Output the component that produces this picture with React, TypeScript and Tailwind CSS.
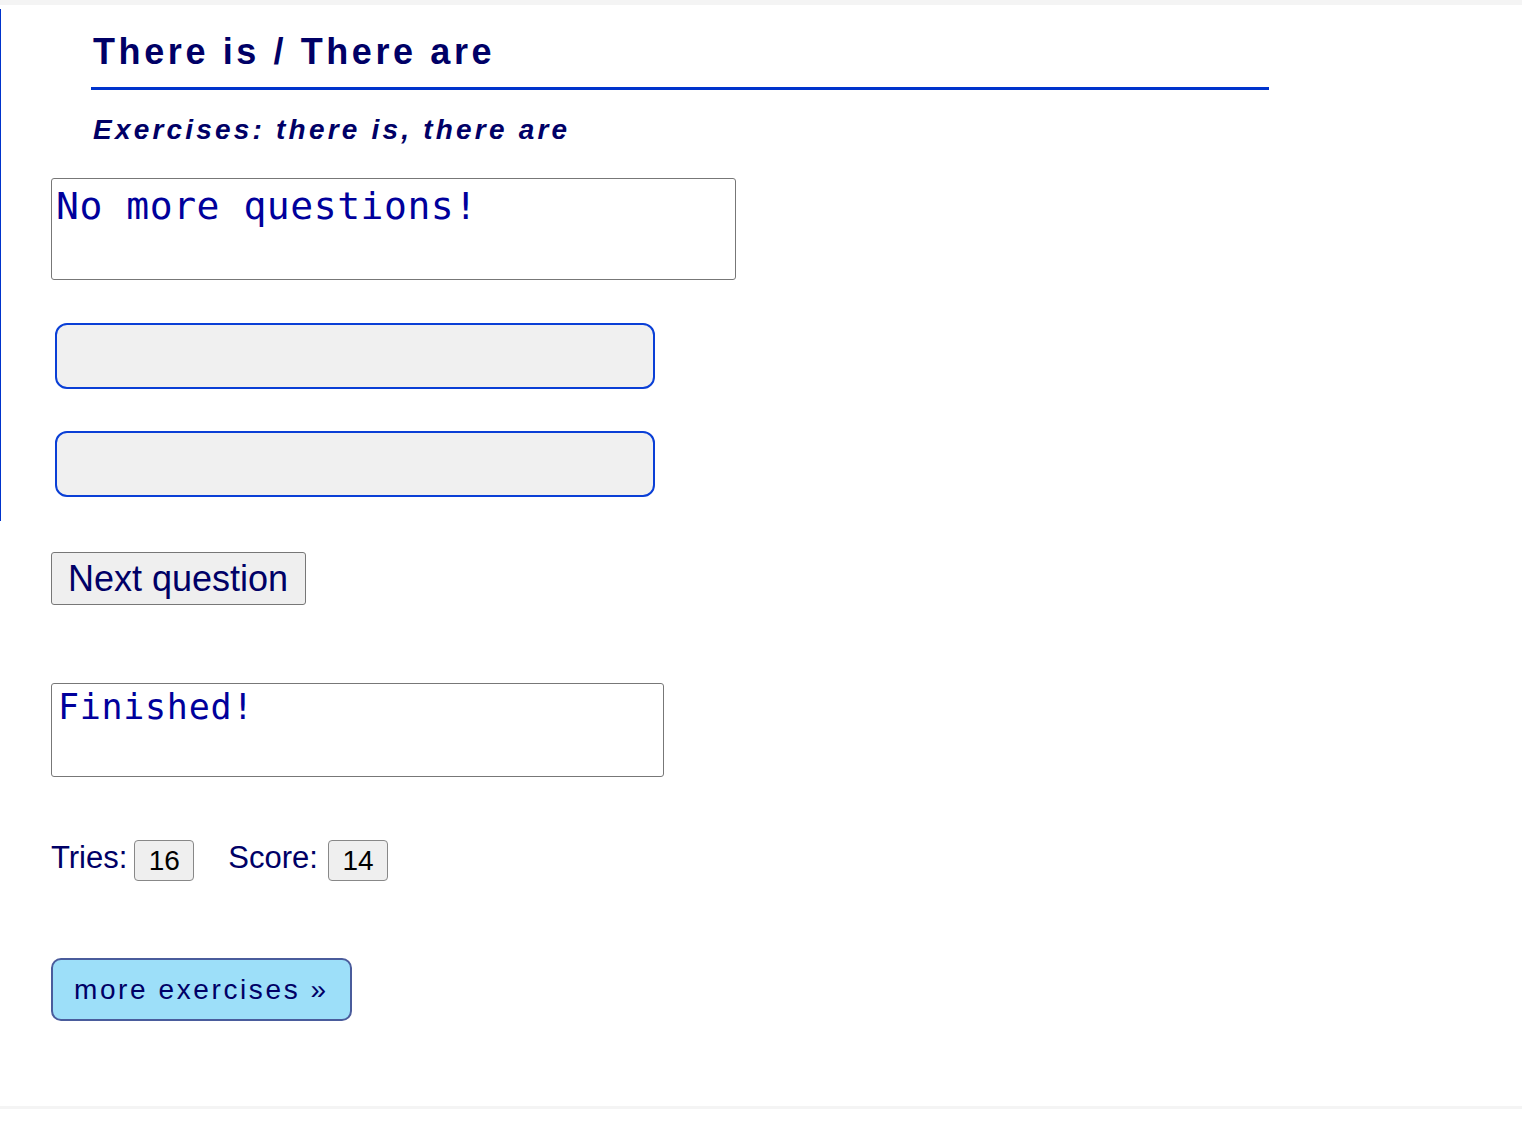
import React from "react";

const sans = "font-['Liberation_Sans',Arial,sans-serif]";
const mono = "font-['DejaVu_Sans_Mono','Liberation_Mono',monospace]";

function Counter({ label, value, gap, boxGap }: { label: string; value: number; gap: string; boxGap: string }) {
  return (
    <div className={`flex items-start ${gap}`}>
      <span className="text-[31px] leading-[36px] text-[#000066]">{label}</span>
      <div
        className={`${boxGap} flex h-[41px] w-[60px] items-center justify-center rounded-[4px] border border-[#888] bg-[#efefef] text-[28px] text-black`}
      >
        {value}
      </div>
    </div>
  );
}

export default function App() {
  return (
    <div className={`min-h-[1134px] bg-white ${sans}`}>
      <div className="h-[5px] bg-[#f4f4f4]" />

      <div className="mt-[4px] border-l border-[#0033cc] pb-[24px]">
        <div className="ml-[90px] w-[1178px] border-b-[3px] border-[#0033cc] pb-[14px] pl-[2px] pt-[22px]">
          <h1 className="text-[36px] font-bold leading-[42px] tracking-[3.6px] text-[#000066]">
            There is / There are
          </h1>
        </div>
        <h2 className="ml-[92px] mt-[24px] text-[28px] font-bold italic leading-[32px] tracking-[3.2px] text-[#000066]">
          Exercises: there is, there are
        </h2>

        <div
          className={`ml-[50px] mt-[32px] h-[102px] w-[685px] rounded-[3px] border border-[#777] pl-[4px] pt-[5px] text-[38px] leading-[44px] tracking-[0.55px] text-[#00009c] ${mono}`}
        >
          No more questions!
        </div>

        <div className="ml-[54px] mt-[43px] h-[66px] w-[600px] rounded-[12px] border-2 border-[#0a3fd6] bg-[#f0f0f0]" />
        <div className="ml-[54px] mt-[42px] h-[66px] w-[600px] rounded-[12px] border-2 border-[#0a3fd6] bg-[#f0f0f0]" />
      </div>

      <div className="ml-[51px]">
        <button className="mt-[31px] block h-[53px] w-[255px] rounded-[3px] border border-[#777] bg-[#efefef] pl-[16px] text-left text-[36px] leading-[40px] text-[#000066]">
          Next question
        </button>

        <div
          className={`mt-[78px] h-[94px] w-[613px] rounded-[3px] border border-[#777] pl-[6px] pt-[3px] text-[35px] leading-[41px] tracking-[0.7px] text-[#00009c] ${mono}`}
        >
          Finished!
        </div>

        <div className="mt-[63px] flex items-start">
          <Counter label="Tries:" value={16} gap="" boxGap="ml-[7px]" />
          <Counter label="Score:" value={14} gap="ml-[34px]" boxGap="ml-[10px]" />
        </div>

        <button className="mt-[77px] flex h-[63px] w-[301px] items-center rounded-[10px] border-2 border-[#4a5c9c] bg-[#9ddff9] pl-[21px] text-[28px] leading-[32px] tracking-[2.6px] text-[#000066]">
          more exercises »
        </button>
      </div>

      <div className="mt-[85px] h-[3px] bg-[#f4f4f4]" />
    </div>
  );
}
